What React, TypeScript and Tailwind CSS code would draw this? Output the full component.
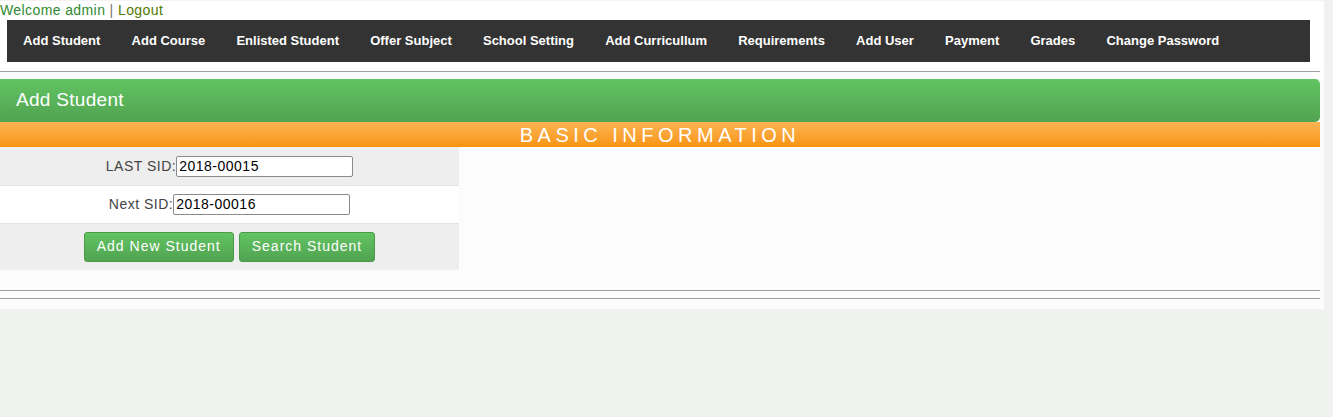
import React from 'react';

const navItems = [
  'Add Student',
  'Add Course',
  'Enlisted Student',
  'Offer Subject',
  'School Setting',
  'Add Curricullum',
  'Requirements',
  'Add User',
  'Payment',
  'Grades',
  'Change Password',
];

const App: React.FC = () => {
  return (
    <div className="min-h-[417px] bg-[#f0f2ef] font-['Liberation_Sans',Arial,sans-serif]">
      <div className="w-[1324px] bg-[#fcfcfc] pb-[10px]">
        {/* top bar */}
        <div className="h-px bg-[#f3f3f3]" />
        <div className="bg-white">
          <div className="h-[19px] text-[14px] leading-[19px] tracking-[0.4px] text-[#2f8a2f]">
            Welcome admin <span className="text-[#777]">|</span>{' '}
            <span className="text-[#4f7a00]">Logout</span>
          </div>

          {/* nav */}
          <div className="ml-[7px] flex h-[42px] w-[1303px] items-center bg-[#333333] pl-[0.5px]">
            {navItems.map((item) => (
              <span
                key={item}
                className="shrink-0 whitespace-nowrap px-[15.6px] text-[13px] font-bold text-white"
              >
                {item}
              </span>
            ))}
          </div>
          <div className="h-[9px]" />
        </div>
        <div className="mr-[4px] h-px bg-[#a0a0a0]" />
        <div className="h-[7px] bg-white" />

        {/* title */}
        <div className="mr-[4px] flex h-[43px] items-center rounded-r-[5px] bg-gradient-to-b from-[#62c462] to-[#51a351] pl-[16px] text-[19px] tracking-[0.3px] text-white">
          Add Student
        </div>
        <div className="mr-[4px] flex h-[25px] items-center justify-center bg-gradient-to-b from-[#fbb450] to-[#f89406] pt-px text-[20px] leading-none tracking-[4.5px] text-white">
          BASIC INFORMATION
        </div>

        {/* form */}
        <div className="w-[459px] text-[14px] tracking-[0.5px] text-[#444]">
          <div className="flex h-[39px] items-center justify-center border-b border-[#e2e2e2] bg-[#eeeeee]">
            <span>LAST SID:</span>
            <input
              readOnly
              value="2018-00015"
              className="h-[21px] w-[177px] rounded-[2px] border border-[#8a8a8a] bg-white px-[2px] text-[14px] tracking-[0.5px] text-black"
            />
          </div>
          <div className="flex h-[38px] items-center justify-center border-b border-[#e2e2e2] bg-white">
            <span>Next SID:</span>
            <input
              readOnly
              value="2018-00016"
              className="h-[21px] w-[177px] rounded-[2px] border border-[#8a8a8a] bg-white px-[2px] text-[14px] tracking-[0.5px] text-black"
            />
          </div>
          <div className="flex h-[46px] items-center justify-center gap-[5px] bg-[#eeeeee] pb-px">
            <button className="h-[30px] rounded-[3px] border border-[#4a9a4a] bg-gradient-to-b from-[#62c462] to-[#51a351] px-[12px] text-[14px] tracking-[1px] text-white">
              Add New Student
            </button>
            <button className="h-[30px] rounded-[3px] border border-[#4a9a4a] bg-gradient-to-b from-[#62c462] to-[#51a351] px-[12px] text-[14px] tracking-[1px] text-white">
              Search Student
            </button>
          </div>
        </div>

        <div className="h-[20px]" />
        <div className="mr-[4px] h-px bg-[#a0a0a0]" />
        <div className="h-[7px]" />
        <div className="mr-[4px] h-px bg-[#a0a0a0]" />
      </div>
    </div>
  );
};

export default App;
